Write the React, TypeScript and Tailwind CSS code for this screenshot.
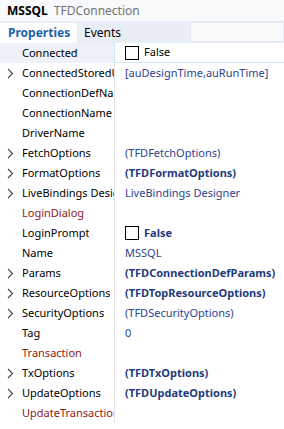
const rows: { name: string; value?: string; kind?: "plain" | "bold" | "check" | "checkBold"; expand?: boolean; red?: boolean }[] = [
  { name: "Connected", value: "False", kind: "check" },
  { name: "ConnectedStoredUsage", value: "[auDesignTime,auRunTime]", expand: true },
  { name: "ConnectionDefName" },
  { name: "ConnectionName" },
  { name: "DriverName" },
  { name: "FetchOptions", value: "(TFDFetchOptions)", expand: true },
  { name: "FormatOptions", value: "(TFDFormatOptions)", kind: "bold", expand: true },
  { name: "LiveBindings Designer", value: "LiveBindings Designer", expand: true },
  { name: "LoginDialog", red: true },
  { name: "LoginPrompt", value: "False", kind: "checkBold" },
  { name: "Name", value: "MSSQL" },
  { name: "Params", value: "(TFDConnectionDefParams)", kind: "bold", expand: true },
  { name: "ResourceOptions", value: "(TFDTopResourceOptions)", kind: "bold", expand: true },
  { name: "SecurityOptions", value: "(TFDSecurityOptions)", expand: true },
  { name: "Tag", value: "0" },
  { name: "Transaction", red: true },
  { name: "TxOptions", value: "(TFDTxOptions)", kind: "bold", expand: true },
  { name: "UpdateOptions", value: "(TFDUpdateOptions)", kind: "bold", expand: true },
  { name: "UpdateTransaction", red: true },
];

function Chevron() {
  return (
    <svg width="7" height="11" viewBox="0 0 7 11" className="shrink-0">
      <path d="M1 1 L5.5 5.5 L1 10" fill="none" stroke="#444" strokeWidth="1.1" />
    </svg>
  );
}

function Box() {
  return <span className="inline-block w-[14px] h-[14px] border border-black bg-white shrink-0" />;
}

export default function App() {
  return (
    <div className="w-[284px] h-[429px] overflow-hidden bg-white text-[11px]" style={{ fontFamily: '"Noto Sans", sans-serif' }}>
      <div className="h-[21px] flex items-center gap-[6px] px-[7px] bg-[#f7f9fb]">
        <span className="font-bold text-[12px] text-black">MSSQL</span>
        <span className="text-[12px] text-[#737373]">TFDConnection</span>
      </div>
      <div className="h-[22px] flex items-end bg-[#e9eef4]">
        <div className="h-[20px] w-[77px] bg-white flex items-center pl-[8px] font-bold text-[12px] text-[#1b62ab]">Properties</div>
        <div className="h-[20px] w-[113px] flex items-center pl-[7px] text-[12px] text-black">Events</div>
        <div className="h-[20px] flex-1 mb-[1px] bg-[#f8fafc] border border-[#e2e8ef]" />
      </div>
      <div className="flex flex-col">
        {rows.map((r, i) => (
          <div key={r.name} className="h-[20px] flex">
            <div className={`w-[114px] shrink-0 flex items-center overflow-hidden whitespace-nowrap ${i === 0 ? "bg-[#eef2f8]" : ""}`}>
              <span className="w-[22px] shrink-0 flex justify-center pr-[2px]">{r.expand && <Chevron />}</span>
              <span className={`min-w-0 overflow-hidden ${r.red ? "text-[#8b1a1a]" : "text-black"}`}>{r.name}</span>
            </div>
            <div className={`flex-1 flex items-center gap-[5px] pl-[10px] whitespace-nowrap border-l ${i === 0 ? "border-[#cde5f8] border-b" : "border-[#e3e3e3]"}`}>
              {(r.kind === "check" || r.kind === "checkBold") && <Box />}
              {r.value && (
                <span className={`${r.kind === "bold" || r.kind === "checkBold" ? "font-bold text-[#233a7d]" : r.kind === "check" ? "text-black" : "text-[#2e3f8f]"}`}>
                  {r.value}
                </span>
              )}
            </div>
          </div>
        ))}
      </div>
    </div>
  );
}
